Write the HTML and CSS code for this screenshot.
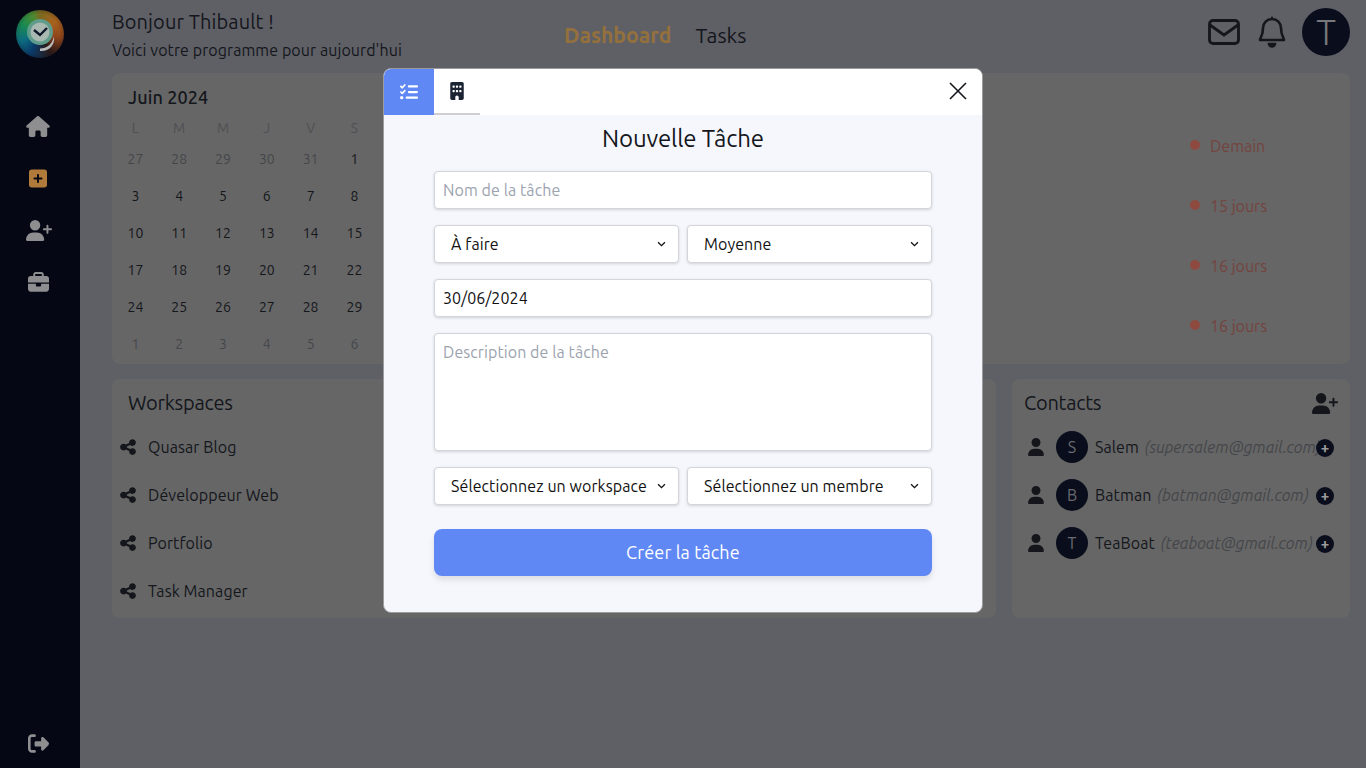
FILE: index.html
```html
<!DOCTYPE html>
<html lang="fr">
<head>
    <meta charset="UTF-8">
    <meta name="viewport" content="width=device-width, initial-scale=1.0">
    <title>Dashboard</title>
    <link rel="stylesheet" href="styles.css">
</head>
<body>
    <aside class="sidebar">
        <div class="logo">
            <svg viewBox="0 0 48 48" width="48" height="48">
                <circle cx="24" cy="22" r="13" fill="#5f9c8c"/>
                <circle cx="24" cy="22" r="9.500" fill="#a9b8b0"/>
                <path d="M18 20l6 5 7-7" fill="none" stroke="#10162c" stroke-width="2.400"/>
                <path d="M24 38.500c7 0 12-4 14-12 1.500 9-6 15.500-14 14.500z" fill="#b9b9b9"/>
            </svg>
        </div>
        <nav class="side-nav">
            <a class="side-link">
                <svg viewBox="0 0 576 512" width="24" height="21"><path fill="currentColor" d="M575.800 255.500c0 18-15 32.100-32 32.100h-32l.7 160.200c0 2.700-.2 5.400-.5 8.100V472c0 22.100-17.900 40-40 40H456c-1.100 0-2.200 0-3.300-.1-1.400.1-2.800.1-4.200.1H392c-22.100 0-40-17.900-40-40V384c0-17.700-14.300-32-32-32H256c-17.700 0-32 14.300-32 32v88c0 22.100-17.900 40-40 40H128c-1.500 0-3-.1-4.500-.2-1.200.1-2.400.2-3.600.2H104c-22.100 0-40-17.900-40-40V360c0-.9 0-1.900.1-2.800V287.600H32c-18 0-32-14-32-32.100 0-9 3-17 10-24L266.400 8c7-7 15-8 22-8s15 2 21 7L564.800 231.500c8 7 12 15 11 24z"/></svg>
            </a>
            <a class="side-link side-link-active">
                <svg viewBox="0 0 448 512" width="18" height="21"><path fill="currentColor" d="M64 32C28.700 32 0 60.700 0 96V416c0 35.300 28.700 64 64 64H384c35.300 0 64-28.700 64-64V96c0-35.300-28.700-64-64-64H64zM200 344V280H136c-13.300 0-24-10.700-24-24s10.700-24 24-24h64V168c0-13.300 10.700-24 24-24s24 10.700 24 24v64h64c13.300 0 24 10.700 24 24s-10.700 24-24 24H248v64c0 13.300-10.700 24-24 24s-24-10.700-24-24z"/></svg>
            </a>
            <a class="side-link side-link-user">
                <svg viewBox="0 0 640 512" width="26" height="21"><path fill="currentColor" d="M96 128a128 128 0 1 1 256 0A128 128 0 1 1 96 128zM0 482.300C0 383.800 79.800 304 178.300 304h91.400C368.200 304 448 383.800 448 482.300c0 16.400-13.300 29.700-29.700 29.700H29.700C13.300 512 0 498.700 0 482.300zM504 312V248H440c-13.300 0-24-10.700-24-24s10.700-24 24-24h64V136c0-13.300 10.700-24 24-24s24 10.700 24 24v64h64c13.300 0 24 10.700 24 24s-10.700 24-24 24H552v64c0 13.300-10.700 24-24 24s-24-10.700-24-24z"/></svg>
            </a>
            <a class="side-link">
                <svg viewBox="0 0 512 512" width="21" height="21"><path fill="currentColor" d="M184 48H328c4.400 0 8 3.600 8 8V96H176V56c0-4.400 3.600-8 8-8zm-56 8V96H64C28.700 96 0 124.700 0 160v96H192 320 512V160c0-35.300-28.700-64-64-64H384V56c0-30.900-25.100-56-56-56H184c-30.900 0-56 25.100-56 56zM512 288H320v32c0 17.700-14.300 32-32 32H224c-17.700 0-32-14.300-32-32V288H0V416c0 35.300 28.700 64 64 64H448c35.300 0 64-28.700 64-64V288z"/></svg>
            </a>
        </nav>
        <a class="side-link logout">
            <svg viewBox="0 0 512 512" width="21" height="21"><path fill="currentColor" d="M502.600 278.600c12.500-12.500 12.500-32.800 0-45.300l-128-128c-9.200-9.200-22.900-11.900-34.900-6.900s-19.800 16.600-19.800 29.600v72H192c-17.700 0-32 14.300-32 32v64c0 17.700 14.300 32 32 32H320v72c0 12.900 7.800 24.600 19.800 29.600s25.700 2.200 34.900-6.900l128-128zM160 96c17.700 0 32-14.300 32-32s-14.300-32-32-32H96C43 32 0 75 0 128V384c0 53 43 96 96 96h64c17.700 0 32-14.300 32-32s-14.300-32-32-32H96c-17.700 0-32-14.300-32-32V128c0-17.700 14.300-32 32-32h64z"/></svg>
        </a>
    </aside>

    <main class="main">
        <header class="topbar">
            <div class="greeting">
                <h1>Bonjour Thibault !</h1>
                <p>Voici votre programme pour aujourd'hui</p>
            </div>
            <nav class="top-nav">
                <a class="top-link top-link-active">Dashboard</a>
                <a class="top-link">Tasks</a>
            </nav>
            <div class="top-actions">
                <svg viewBox="0 0 32 26" width="32" height="26"><rect x="1.500" y="1.500" width="29" height="23" rx="3.500" fill="none" stroke="currentColor" stroke-width="2.800"/><path d="M2 6l14 10L30 6" fill="none" stroke="currentColor" stroke-width="2.800"/></svg>
                <svg class="bell" viewBox="0 0 28 32" width="28" height="32"><path d="M14 3a9 9 0 0 0-9 9c0 8-3 10-3 12h24c0-2-3-4-3-12a9 9 0 0 0-9-9z" fill="none" stroke="currentColor" stroke-width="2.600" stroke-linejoin="round"/><path d="M14 0.500v3M10.500 27.500a3.500 3.500 0 0 0 7 0z" stroke="currentColor" stroke-width="1.600" fill="currentColor"/></svg>
                <div class="avatar avatar-big">T</div>
            </div>
        </header>

        <section class="card card-top">
            <div class="calendar">
                <h2>Juin 2024</h2>
                <div class="cal-grid">
                    <span class="cal-head">L</span><span class="cal-head">M</span><span class="cal-head">M</span><span class="cal-head">J</span><span class="cal-head">V</span><span class="cal-head">S</span>
                    <span class="muted">27</span><span class="muted">28</span><span class="muted">29</span><span class="muted">30</span><span class="muted">31</span><span>1</span>
                    <span>3</span><span>4</span><span>5</span><span>6</span><span>7</span><span>8</span>
                    <span>10</span><span>11</span><span>12</span><span>13</span><span>14</span><span>15</span>
                    <span>17</span><span>18</span><span>19</span><span>20</span><span>21</span><span>22</span>
                    <span>24</span><span>25</span><span>26</span><span>27</span><span>28</span><span>29</span>
                    <span class="muted">1</span><span class="muted">2</span><span class="muted">3</span><span class="muted">4</span><span class="muted">5</span><span class="muted">6</span>
                </div>
            </div>
            <ul class="deadlines">
                <li>Demain</li>
                <li>15 jours</li>
                <li>16 jours</li>
                <li>16 jours</li>
            </ul>
        </section>

        <div class="bottom-row">
            <section class="card workspaces">
                <h3>Workspaces</h3>
                <ul class="ws-list">
                    <li><svg viewBox="0 0 448 512" width="16" height="18"><path fill="currentColor" d="M352 224c53 0 96-43 96-96s-43-96-96-96s-96 43-96 96c0 4 .2 8 .7 11.900l-94.100 47C145.400 170.200 121.900 160 96 160c-53 0-96 43-96 96s43 96 96 96c25.900 0 49.400-10.200 66.600-26.900l94.100 47c-.5 3.900-.7 7.800-.7 11.900c0 53 43 96 96 96s96-43 96-96s-43-96-96-96c-25.900 0-49.400 10.200-66.600 26.900l-94.100-47c.5-3.900 .7-7.800 .7-11.900s-.2-8-.7-11.900l94.100-47C302.600 213.800 326.100 224 352 224z"/></svg>Quasar Blog</li>
                    <li><svg viewBox="0 0 448 512" width="16" height="18"><path fill="currentColor" d="M352 224c53 0 96-43 96-96s-43-96-96-96s-96 43-96 96c0 4 .2 8 .7 11.900l-94.100 47C145.400 170.200 121.900 160 96 160c-53 0-96 43-96 96s43 96 96 96c25.900 0 49.400-10.200 66.600-26.900l94.100 47c-.5 3.900-.7 7.800-.7 11.900c0 53 43 96 96 96s96-43 96-96s-43-96-96-96c-25.900 0-49.400 10.200-66.600 26.900l-94.100-47c.5-3.900 .7-7.800 .7-11.900s-.2-8-.7-11.900l94.100-47C302.600 213.800 326.100 224 352 224z"/></svg>Développeur Web</li>
                    <li><svg viewBox="0 0 448 512" width="16" height="18"><path fill="currentColor" d="M352 224c53 0 96-43 96-96s-43-96-96-96s-96 43-96 96c0 4 .2 8 .7 11.900l-94.100 47C145.400 170.200 121.900 160 96 160c-53 0-96 43-96 96s43 96 96 96c25.900 0 49.400-10.200 66.600-26.900l94.100 47c-.5 3.900-.7 7.800-.7 11.900c0 53 43 96 96 96s96-43 96-96s-43-96-96-96c-25.900 0-49.400 10.200-66.600 26.900l-94.100-47c.5-3.900 .7-7.800 .7-11.900s-.2-8-.7-11.900l94.100-47C302.600 213.800 326.100 224 352 224z"/></svg>Portfolio</li>
                    <li><svg viewBox="0 0 448 512" width="16" height="18"><path fill="currentColor" d="M352 224c53 0 96-43 96-96s-43-96-96-96s-96 43-96 96c0 4 .2 8 .7 11.900l-94.100 47C145.400 170.200 121.900 160 96 160c-53 0-96 43-96 96s43 96 96 96c25.900 0 49.400-10.200 66.600-26.900l94.100 47c-.5 3.900-.7 7.800-.7 11.900c0 53 43 96 96 96s96-43 96-96s-43-96-96-96c-25.900 0-49.400 10.200-66.600 26.900l-94.100-47c.5-3.900 .7-7.800 .7-11.900s-.2-8-.7-11.900l94.100-47C302.600 213.800 326.100 224 352 224z"/></svg>Task Manager</li>
                </ul>
            </section>
            <section class="card contacts">
                <div class="contacts-head">
                    <h3>Contacts</h3>
                    <svg viewBox="0 0 640 512" width="26" height="21"><path fill="currentColor" d="M96 128a128 128 0 1 1 256 0A128 128 0 1 1 96 128zM0 482.300C0 383.800 79.800 304 178.300 304h91.400C368.200 304 448 383.800 448 482.300c0 16.400-13.300 29.700-29.700 29.700H29.700C13.300 512 0 498.700 0 482.300zM504 312V248H440c-13.300 0-24-10.700-24-24s10.700-24 24-24h64V136c0-13.300 10.700-24 24-24s24 10.700 24 24v64h64c13.300 0 24 10.700 24 24s-10.700 24-24 24H552v64c0 13.300-10.700 24-24 24s-24-10.700-24-24z"/></svg>
                </div>
                <ul class="contact-list">
                    <li>
                        <svg class="person" viewBox="0 0 448 512" width="16" height="18"><path fill="currentColor" d="M224 256A128 128 0 1 0 224 0a128 128 0 1 0 0 256zm-45.700 48C79.800 304 0 383.800 0 482.300C0 498.700 13.300 512 29.700 512H418.300c16.400 0 29.700-13.300 29.700-29.700C448 383.800 368.200 304 269.700 304H178.300z"/></svg>
                        <div class="avatar">S</div>
                        <span class="contact-name">Salem</span>
                        <em class="contact-mail">(supersalem@gmail.com)</em>
                        <span class="add-btn">+</span>
                    </li>
                    <li>
                        <svg class="person" viewBox="0 0 448 512" width="16" height="18"><path fill="currentColor" d="M224 256A128 128 0 1 0 224 0a128 128 0 1 0 0 256zm-45.700 48C79.800 304 0 383.800 0 482.300C0 498.700 13.300 512 29.700 512H418.300c16.400 0 29.700-13.300 29.700-29.700C448 383.800 368.200 304 269.700 304H178.300z"/></svg>
                        <div class="avatar">B</div>
                        <span class="contact-name">Batman</span>
                        <em class="contact-mail">(batman@gmail.com)</em>
                        <span class="add-btn">+</span>
                    </li>
                    <li>
                        <svg class="person" viewBox="0 0 448 512" width="16" height="18"><path fill="currentColor" d="M224 256A128 128 0 1 0 224 0a128 128 0 1 0 0 256zm-45.700 48C79.800 304 0 383.800 0 482.300C0 498.700 13.300 512 29.700 512H418.300c16.400 0 29.700-13.300 29.700-29.700C448 383.800 368.200 304 269.700 304H178.300z"/></svg>
                        <div class="avatar">T</div>
                        <span class="contact-name">TeaBoat</span>
                        <em class="contact-mail">(teaboat@gmail.com)</em>
                        <span class="add-btn">+</span>
                    </li>
                </ul>
            </section>
        </div>
    </main>

    <div class="modal">
        <div class="modal-tabs">
            <button class="tab tab-active" type="button">
                <svg viewBox="0 0 512 512" width="18" height="18"><path fill="currentColor" d="M152.100 38.200c9.900 8.900 10.700 24 1.800 33.900l-72 80c-4.400 4.900-10.600 7.800-17.200 7.900s-12.900-2.400-17.600-7L7 113C-2.300 103.600-2.300 88.400 7 79s24.600-9.400 33.900 0l22.100 22.100 55.100-61.200c8.900-9.900 24-10.700 33.900-1.800zm0 160c9.900 8.900 10.700 24 1.800 33.900l-72 80c-4.400 4.900-10.600 7.800-17.200 7.900s-12.900-2.400-17.600-7L7 273c-9.400-9.400-9.400-24.600 0-33.900s24.600-9.400 33.900 0l22.100 22.100 55.100-61.200c8.900-9.900 24-10.700 33.900-1.800zM224 96c0-17.700 14.300-32 32-32H480c17.700 0 32 14.300 32 32s-14.300 32-32 32H256c-17.700 0-32-14.300-32-32zm0 160c0-17.700 14.300-32 32-32H480c17.700 0 32 14.300 32 32s-14.300 32-32 32H256c-17.700 0-32-14.300-32-32zM160 416c0-17.700 14.300-32 32-32H480c17.700 0 32 14.300 32 32s-14.300 32-32 32H192c-17.700 0-32-14.300-32-32zM48 368a48 48 0 1 1 0 96 48 48 0 1 1 0-96z"/></svg>
            </button>
            <button class="tab" type="button">
                <svg viewBox="0 0 384 512" width="14" height="18"><path fill="currentColor" d="M48 0C21.500 0 0 21.500 0 48V464c0 26.500 21.500 48 48 48h96V432c0-26.500 21.500-48 48-48s48 21.500 48 48v80h96c26.500 0 48-21.500 48-48V48c0-26.500-21.500-48-48-48H48zM64 240c0-8.800 7.200-16 16-16h32c8.800 0 16 7.200 16 16v32c0 8.800-7.200 16-16 16H80c-8.800 0-16-7.200-16-16V240zm112-16h32c8.800 0 16 7.200 16 16v32c0 8.800-7.200 16-16 16H176c-8.800 0-16-7.200-16-16V240c0-8.800 7.200-16 16-16zm80 16c0-8.800 7.200-16 16-16h32c8.800 0 16 7.200 16 16v32c0 8.800-7.200 16-16 16H272c-8.800 0-16-7.200-16-16V240zM80 96h32c8.800 0 16 7.200 16 16v32c0 8.800-7.200 16-16 16H80c-8.800 0-16-7.200-16-16V112c0-8.800 7.200-16 16-16zm80 16c0-8.800 7.200-16 16-16h32c8.800 0 16 7.200 16 16v32c0 8.800-7.200 16-16 16H176c-8.800 0-16-7.200-16-16V112zM272 96h32c8.800 0 16 7.200 16 16v32c0 8.800-7.200 16-16 16H272c-8.800 0-16-7.200-16-16V112c0-8.800 7.200-16 16-16z"/></svg>
            </button>
            <button class="close-btn" type="button">
                <svg viewBox="0 0 20 20" width="20" height="20"><path d="M2 2l16 16M18 2L2 18" stroke="currentColor" stroke-width="1.600" fill="none"/></svg>
            </button>
        </div>
        <form class="modal-body">
            <h2>Nouvelle Tâche</h2>
            <input class="field" type="text" placeholder="Nom de la tâche">
            <div class="field-row">
                <div class="select-box"><span>À faire</span><svg viewBox="0 0 10 7" width="9" height="6"><path d="M1 1.500l4 4 4-4" fill="none" stroke="currentColor" stroke-width="1.500"/></svg></div>
                <div class="select-box"><span>Moyenne</span><svg viewBox="0 0 10 7" width="9" height="6"><path d="M1 1.500l4 4 4-4" fill="none" stroke="currentColor" stroke-width="1.500"/></svg></div>
            </div>
            <input class="field" type="text" value="30/06/2024">
            <textarea class="field field-area" placeholder="Description de la tâche"></textarea>
            <div class="field-row">
                <div class="select-box"><span>Sélectionnez un workspace</span><svg viewBox="0 0 10 7" width="9" height="6"><path d="M1 1.500l4 4 4-4" fill="none" stroke="currentColor" stroke-width="1.500"/></svg></div>
                <div class="select-box"><span>Sélectionnez un membre</span><svg viewBox="0 0 10 7" width="9" height="6"><path d="M1 1.500l4 4 4-4" fill="none" stroke="currentColor" stroke-width="1.500"/></svg></div>
            </div>
            <button class="submit-btn" type="button">Créer la tâche</button>
        </form>
    </div>
</body>
</html>
```
FILE: styles.css
```css
* {
    box-sizing: border-box;
}

body {
    font-family: Ubuntu, "Noto Sans", sans-serif;
    background-color: #5f6066;
    color: #14161c;
    margin: 0;
    height: 768px;
    overflow: hidden;
    display: flex;
}

h1, h2, h3, p, ul {
    margin: 0;
    padding: 0;
    font-weight: 400;
}

ul {
    list-style: none;
}

/* sidebar */
.sidebar {
    width: 80px;
    flex-shrink: 0;
    height: 768px;
    background-color: #050814;
    color: #8e8e90;
    display: flex;
    flex-direction: column;
    align-items: center;
    padding: 10px 4px 12px 0;
}

.logo {
    width: 48px;
    height: 48px;
    margin-left: 4px;
    border-radius: 50%;
    background:
        radial-gradient(circle, rgba(5, 8, 20, 0) 58%, rgba(5, 8, 20, 0.6) 100%),
        conic-gradient(#7a6a20, #a8621c 50deg, #8f431b 100deg, #2a1a18 150deg, #0a3a6a 205deg, #0c6c80 250deg, #1a8a50 300deg, #4c8a30 340deg, #7a6a20);
}

.logo svg {
    display: block;
}

.side-nav {
    margin-top: 55.5px;
    display: flex;
    flex-direction: column;
    gap: 26px;
    flex: 1;
}

.side-link {
    height: 26px;
    display: flex;
    align-items: center;
    justify-content: center;
}

.side-link-active {
    color: #b07a3a;
}

.side-link-user {
    margin-left: 2px;
}

/* top bar */
.main {
    flex: 1;
    padding: 0 16px 0 32px;
}

.topbar {
    height: 73px;
    display: flex;
}

.greeting {
    width: 452px;
    padding-top: 9px;
}

.greeting h1 {
    font-size: 20px;
    line-height: 26px;
    letter-spacing: 0.1px;
}

.greeting p {
    font-size: 16px;
    line-height: 24px;
    margin-top: 3px;
    letter-spacing: 0.08px;
}

.top-nav {
    display: flex;
    gap: 24px;
    padding-top: 23px;
    font-size: 21.2px;
}

.top-link-active {
    color: #94703c;
    font-weight: 700;
}

.top-actions {
    margin-left: auto;
    display: flex;
    align-items: center;
    gap: 16px;
    padding-bottom: 10px;
}

.bell {
    margin-left: 2px;
}

.avatar {
    width: 32px;
    height: 32px;
    border-radius: 50%;
    background-color: #0a0e1c;
    color: #6a6b70;
    font-size: 16px;
    display: flex;
    align-items: center;
    justify-content: center;
    flex-shrink: 0;
}

.avatar-big {
    width: 48px;
    height: 48px;
    font-size: 36px;
    font-weight: 300;
    color: #77787c;
}

/* cards */
.card {
    background-color: #666666;
    border-radius: 8px;
}

.card-top {
    height: 291px;
    padding: 12px 16px;
    display: flex;
    justify-content: space-between;
}

.calendar h2 {
    font-size: 18px;
    line-height: 24px;
    font-weight: 500;
    letter-spacing: 0.1px;
}

.cal-grid {
    margin: 6.5px 0 0 -14.5px;
    display: grid;
    grid-template-columns: repeat(6, 43.8px);
    grid-template-rows: 25px repeat(6, 37px);
    font-size: 14px;
    text-align: center;
    line-height: 37px;
}

.cal-head {
    line-height: 25px;
    color: #4f5054;
}

.muted {
    color: #45464a;
}

.deadlines {
    width: 144px;
    padding-top: 49px;
    color: #74443f;
}

.deadlines li {
    height: 60px;
    font-size: 16px;
    line-height: 24px;
    display: flex;
    align-items: flex-start;
    gap: 10px;
}

.deadlines li::before {
    content: "";
    width: 10px;
    height: 10px;
    border-radius: 50%;
    background-color: #8f4a40;
    margin-top: 6px;
}

.bottom-row {
    display: flex;
    gap: 16px;
    margin-top: 15px;
}

.workspaces {
    width: 884px;
    height: 239px;
    padding: 11px 8px;
}

.workspaces h3,
.contacts h3 {
    font-size: 20px;
    line-height: 26px;
    letter-spacing: -0.25px;
}

.workspaces h3 {
    padding-left: 8px;
}

.ws-list {
    margin-top: 7px;
}

.ws-list li {
    height: 48px;
    display: flex;
    align-items: center;
    gap: 12px;
    font-size: 16px;
    letter-spacing: 0.08px;
}

.contacts {
    flex: 1;
    padding: 11px 12px;
}

.contacts-head {
    display: flex;
    justify-content: space-between;
    align-items: center;
}

.contact-list {
    margin-top: 7px;
}

.contact-list li {
    height: 48px;
    display: flex;
    align-items: center;
    font-size: 16px;
    white-space: nowrap;
    padding-left: 4px;
}

.contact-list .person {
    margin-right: 12px;
    flex-shrink: 0;
}

.contact-name {
    margin-left: 7px;
    margin-right: 5.5px;
    letter-spacing: 0.1px;
}

.contact-mail {
    color: #45464a;
}

.add-btn {
    position: absolute;
    left: 1316px;
    margin-top: 2px;
    width: 18px;
    height: 18px;
    border-radius: 50%;
    background-color: #0a0e1c;
    color: #999999;
    font-size: 15px;
    line-height: 17px;
    font-weight: 700;
    text-align: center;
}

/* modal */
.modal {
    position: fixed;
    left: 383px;
    top: 68px;
    width: 600px;
    height: 545px;
    background-color: #f6f7fc;
    border: 1px solid #9c9ca0;
    border-radius: 8px;
    overflow: hidden;
}

.modal-tabs {
    height: 46px;
    background-color: white;
    display: flex;
}

.tab {
    width: 46px;
    height: 46px;
    border: none;
    background: white;
    color: #1b2433;
    border-bottom: 2px solid #cfcfd3;
    padding: 0;
    display: flex;
    align-items: center;
    justify-content: center;
}

.tab-active {
    width: 50px;
    background-color: #6088f5;
    color: white;
    border-bottom: none;
}

.close-btn {
    margin-left: auto;
    margin-right: 14px;
    border: none;
    background: none;
    color: #14161c;
    padding: 0;
}

.modal-body {
    padding: 8px 50px 0;
    display: flex;
    flex-direction: column;
    gap: 16px;
}

.modal-body h2 {
    font-size: 24px;
    line-height: 32px;
    text-align: center;
    color: #14161c;
    letter-spacing: -0.14px;
}

.field {
    width: 100%;
    height: 38px;
    padding: 0 8px;
    font-family: inherit;
    font-size: 16px;
    letter-spacing: 0.08px;
    color: #111;
    background: white;
    border: 1px solid #d4d5da;
    border-radius: 4px;
    box-shadow: 0 1px 3px rgba(0, 0, 0, 0.15);
}

.field::placeholder {
    color: #9ca3af;
}

.field-area {
    height: 118px;
    padding-top: 9px;
    resize: none;
    display: block;
}

.field-row {
    display: flex;
    gap: 8px;
}

.select-box {
    flex: 1;
    height: 38px;
    padding: 0 12px 0 16px;
    font-size: 16px;
    letter-spacing: 0.08px;
    color: #111;
    background: white;
    border: 1px solid #d4d5da;
    border-radius: 4px;
    box-shadow: 0 1px 3px rgba(0, 0, 0, 0.15);
    display: flex;
    align-items: center;
    justify-content: space-between;
    white-space: nowrap;
}

.submit-btn {
    height: 47px;
    margin-top: 8px;
    padding-bottom: 3px;
    background-color: #6088f5;
    color: white;
    font-family: inherit;
    font-size: 18px;
    letter-spacing: 0.15px;
    border: none;
    border-radius: 8px;
    box-shadow: 0 4px 6px rgba(0, 0, 0, 0.1);
}
```
